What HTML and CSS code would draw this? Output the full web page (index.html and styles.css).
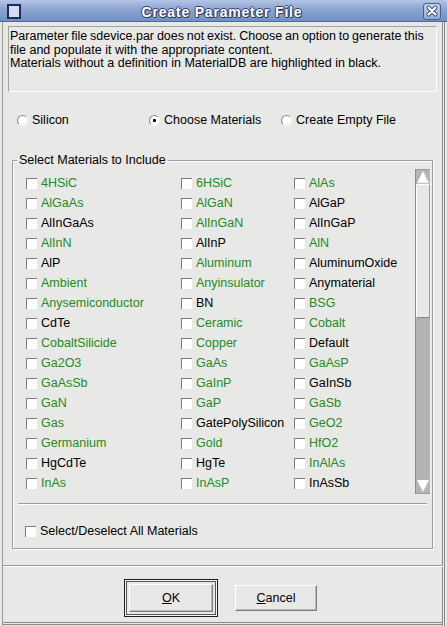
FILE: index.html
```html
<!DOCTYPE html>
<html>
<head>
<meta charset="utf-8">
<title>Create Parameter File</title>
<link rel="stylesheet" href="styles.css">
</head>
<body>
<div class="window">
  <div class="titlebar">
    <span class="ticon"></span>
    <span class="title">Create Parameter File</span>
    <span class="close">
      <svg width="18" height="17" viewBox="0 0 18 17">
        <path d="M5.5 4.5 L12.5 11.5 M12.5 4.5 L5.5 11.5" stroke="#44587f" stroke-width="4" stroke-linecap="round" fill="none"/>
        <path d="M5.5 4.5 L12.5 11.5 M12.5 4.5 L5.5 11.5" stroke="#ffffff" stroke-width="2" stroke-linecap="round" fill="none"/>
      </svg>
    </span>
  </div>
  <div class="frame">
    <div class="content">
      <div class="msg"><span class="first">Parameter file sdevice.par does not exist. Choose an option to generate this</span><br>file and populate it with the appropriate content.<br>Materials without a definition in MaterialDB are highlighted in black.</div>
      <div class="radios">
        <div class="radio"><span class="rb"></span>Silicon</div>
        <div class="radio"><span class="rb on"></span>Choose Materials</div>
        <div class="radio"><span class="rb"></span>Create Empty File</div>
      </div>
      <div class="group">
        <span class="legend">Select Materials to Include</span>
        <div class="listwrap">
          <div class="list">
            <div class="item g"><span class="cb"></span>4HSiC</div>
            <div class="item g"><span class="cb"></span>6HSiC</div>
            <div class="item g"><span class="cb"></span>AlAs</div>
            <div class="item g"><span class="cb"></span>AlGaAs</div>
            <div class="item g"><span class="cb"></span>AlGaN</div>
            <div class="item"><span class="cb"></span>AlGaP</div>
            <div class="item"><span class="cb"></span>AlInGaAs</div>
            <div class="item g"><span class="cb"></span>AlInGaN</div>
            <div class="item"><span class="cb"></span>AlInGaP</div>
            <div class="item g"><span class="cb"></span>AlInN</div>
            <div class="item"><span class="cb"></span>AlInP</div>
            <div class="item g"><span class="cb"></span>AlN</div>
            <div class="item"><span class="cb"></span>AlP</div>
            <div class="item g"><span class="cb"></span>Aluminum</div>
            <div class="item"><span class="cb"></span>AluminumOxide</div>
            <div class="item g"><span class="cb"></span>Ambient</div>
            <div class="item g"><span class="cb"></span>Anyinsulator</div>
            <div class="item"><span class="cb"></span>Anymaterial</div>
            <div class="item g"><span class="cb"></span>Anysemiconductor</div>
            <div class="item"><span class="cb"></span>BN</div>
            <div class="item g"><span class="cb"></span>BSG</div>
            <div class="item"><span class="cb"></span>CdTe</div>
            <div class="item g"><span class="cb"></span>Ceramic</div>
            <div class="item g"><span class="cb"></span>Cobalt</div>
            <div class="item g"><span class="cb"></span>CobaltSilicide</div>
            <div class="item g"><span class="cb"></span>Copper</div>
            <div class="item"><span class="cb"></span>Default</div>
            <div class="item g"><span class="cb"></span>Ga2O3</div>
            <div class="item g"><span class="cb"></span>GaAs</div>
            <div class="item g"><span class="cb"></span>GaAsP</div>
            <div class="item g"><span class="cb"></span>GaAsSb</div>
            <div class="item g"><span class="cb"></span>GaInP</div>
            <div class="item"><span class="cb"></span>GaInSb</div>
            <div class="item g"><span class="cb"></span>GaN</div>
            <div class="item g"><span class="cb"></span>GaP</div>
            <div class="item g"><span class="cb"></span>GaSb</div>
            <div class="item g"><span class="cb"></span>Gas</div>
            <div class="item"><span class="cb"></span>GatePolySilicon</div>
            <div class="item g"><span class="cb"></span>GeO2</div>
            <div class="item g"><span class="cb"></span>Germanium</div>
            <div class="item g"><span class="cb"></span>Gold</div>
            <div class="item g"><span class="cb"></span>HfO2</div>
            <div class="item"><span class="cb"></span>HgCdTe</div>
            <div class="item"><span class="cb"></span>HgTe</div>
            <div class="item g"><span class="cb"></span>InAlAs</div>
            <div class="item g"><span class="cb"></span>InAs</div>
            <div class="item g"><span class="cb"></span>InAsP</div>
            <div class="item"><span class="cb"></span>InAsSb</div>
          </div>
          <div class="scrollbar">
            <div class="sb-btn sb-up">
              <svg width="14" height="14" viewBox="0 0 14 14"><polygon points="1,13 7,1 13,13" fill="#ffffff"/><polyline points="7,1 13,13 1,13" fill="none" stroke="#d6d6d6" stroke-width="1"/></svg>
            </div>
            <div class="sb-thumb"></div>
            <div class="sb-track"></div>
            <div class="sb-btn sb-down">
              <svg width="14" height="14" viewBox="0 0 14 14"><polygon points="1,1 13,1 7,13" fill="#ffffff"/><polyline points="13,1 7,13" fill="none" stroke="#d6d6d6" stroke-width="1"/></svg>
            </div>
          </div>
        </div>
        <div class="gsep"></div>
        <div class="item all"><span class="cb"></span>Select/Deselect All Materials</div>
      </div>
    </div>
    <div class="hsep"></div>
    <div class="buttons">
      <div class="focus"><div class="btn"><u>O</u>K</div></div>
      <div class="btn cancel"><u>C</u>ancel</div>
    </div>
  </div>
</div>
</body>
</html>
```

FILE: styles.css
```css
* { box-sizing: border-box; }
html, body { margin: 0; padding: 0; }
body {
  width: 447px;
  height: 626px;
  overflow: hidden;
  background: #e8e8e6;
  font-family: "Liberation Sans", Arial, Helvetica, sans-serif;
  font-size: 12.5px;
  color: #000;
}
.window {
  width: 447px;
  height: 626px;
  display: flex;
  flex-direction: column;
  background: #e8e8e6;
}
.titlebar {
  flex: none;
  height: 22px;
  display: flex;
  align-items: center;
  padding: 1px 6px 0 7px;
  background: linear-gradient(#b4c6e6, #8ba3d0 45%, #7090c6);
  border-bottom: 1px solid #56698f;
}
.ticon {
  width: 14px;
  height: 15px;
  border: 2px solid #1d2a5c;
  background: #d3ddf0;
}
.title {
  flex: 1;
  text-align: center;
  color: #fff;
  font-weight: bold;
  font-size: 14px;
  letter-spacing: 0.8px;
  line-height: 20px;
  padding-top: 1px;
  text-shadow: 1px 0 0 #2f4068, -1px 0 0 #2f4068, 0 1px 0 #2f4068, 0 -1px 0 #2f4068, 1px 1px 0 #2f4068;
}
.close {
  width: 18px;
  height: 17px;
  border: 1px solid #4b5f88;
  border-radius: 3px;
  background: linear-gradient(#c2d0ea, #94acd6);
  display: flex;
  align-items: center;
  justify-content: center;
}
.close svg { display: block; margin: -1px; }

.frame {
  flex: 1;
  display: flex;
  flex-direction: column;
  padding: 0 4px 0 3px;
  box-shadow:
    inset 2px 0 0 #e8e8e6, inset 3px 0 0 #9a9a9a,
    inset -2px 0 0 #e8e8e6, inset -3px 0 0 #8c8c8c,
    inset -4px 0 0 #e8e8e6, inset -5px 0 0 #8c8c8c,
    inset 0 -1px 0 #e8e8e6, inset 0 -2px 0 #8c8c8c,
    inset 0 -3px 0 #e8e8e6, inset 0 -4px 0 #8c8c8c;
}
.content {
  padding: 4px 6px 0 5px;
}
.msg {
  height: 66px;
  padding: 3px 1px;
  line-height: 13.5px;
  white-space: nowrap;
  overflow: hidden;
  border: 1px solid;
  border-color: #a2a2a2 #fff #fff #a2a2a2;
}
.msg .first { word-spacing: -0.6px; }
.radios {
  display: flex;
  margin-top: 21px;
  padding-left: 9px;
  height: 14px;
  line-height: 14px;
}
.radio {
  width: 132px;
  display: flex;
  align-items: center;
  white-space: nowrap;
}
.rb {
  width: 11px;
  height: 11px;
  margin-right: 4px;
  border-radius: 50%;
  background: #fff;
  border: 1px solid;
  border-color: #8a8a8a #f4f4f4 #f4f4f4 #8a8a8a;
  display: flex;
  align-items: center;
  justify-content: center;
}
.rb.on::after {
  content: "";
  width: 3px;
  height: 3px;
  background: #000;
  border-radius: 1px;
}
.group {
  position: relative;
  margin: 33px 4px 0 4px;
  padding: 8px 1px 7px 0;
  border: 1px solid #9c9c9c;
  box-shadow: 1px 1px 0 #fff, inset 1px 1px 0 #fff;
}
.legend {
  position: absolute;
  top: -8px;
  left: 4px;
  padding: 0 2px;
  line-height: 14px;
  background: #e8e8e6;
  white-space: nowrap;
}
.listwrap {
  display: flex;
  height: 325px;
}
.list {
  flex: 1;
  overflow: hidden;
  padding: 4px 0 0 13px;
  display: grid;
  grid-template-columns: 155px 113px 1fr;
  grid-auto-rows: 20px;
  align-content: start;
}
.item {
  display: flex;
  align-items: center;
  height: 20px;
  line-height: 20px;
  white-space: nowrap;
}
.item.g { color: #238b23; }
.cb {
  flex: none;
  width: 11px;
  height: 11px;
  margin-right: 4px;
  background: #fff;
  border-top: 1px solid #7c7c7c;
  border-left: 1px solid #7c7c7c;
}
.scrollbar {
  width: 16px;
  display: flex;
  flex-direction: column;
  border-left: 1px solid #8c8c8c;
  border-right: 1px solid #f2f2f2;
}
.sb-btn {
  flex: none;
  height: 15px;
  background: #b4b4b4;
  display: flex;
  align-items: center;
  justify-content: center;
}
.sb-btn svg { display: block; }
.sb-up { border-top: 1px solid #9a9a9a; }
.sb-down { height: 16px; border-bottom: 1px solid #9a9a9a; }
.sb-thumb {
  flex: none;
  height: 134px;
  background: #e8e8e8;
  border-top: 1px solid #fff;
  border-left: 1px solid #fff;
  border-right: 1px solid #9a9a9a;
  border-bottom: 1px solid #8a8a8a;
}
.sb-track {
  flex: 1;
  background: #b3b3b3;
}
.gsep {
  margin: 9px 4px 0 5px;
  height: 2px;
  border-top: 1px solid #9c9c9c;
  border-bottom: 1px solid #fff;
}
.item.all {
  margin-top: 16px;
  padding-left: 12px;
}
.hsep {
  margin-top: 16px;
  height: 2px;
  border-top: 1px solid #9c9c9c;
  border-bottom: 1px solid #fff;
}
.buttons {
  display: flex;
  align-items: center;
  margin-top: 12px;
  padding-left: 121px;
}
.focus {
  padding: 4px;
  border: 1px solid #1e1e1e;
  box-shadow: inset 0 0 0 1px #f6f6f6, inset 0 0 0 2px #555;
}
.btn {
  width: 84px;
  height: 28px;
  display: flex;
  align-items: center;
  justify-content: center;
  border: 1px solid;
  border-color: #fff #7e7e7e #7e7e7e #fff;
  box-shadow: inset -1px -1px 0 #b8b8b8;
}
.btn.cancel {
  width: 82px;
  height: 26px;
  margin-left: 17px;
}
.btn u { text-decoration: underline; }
```
